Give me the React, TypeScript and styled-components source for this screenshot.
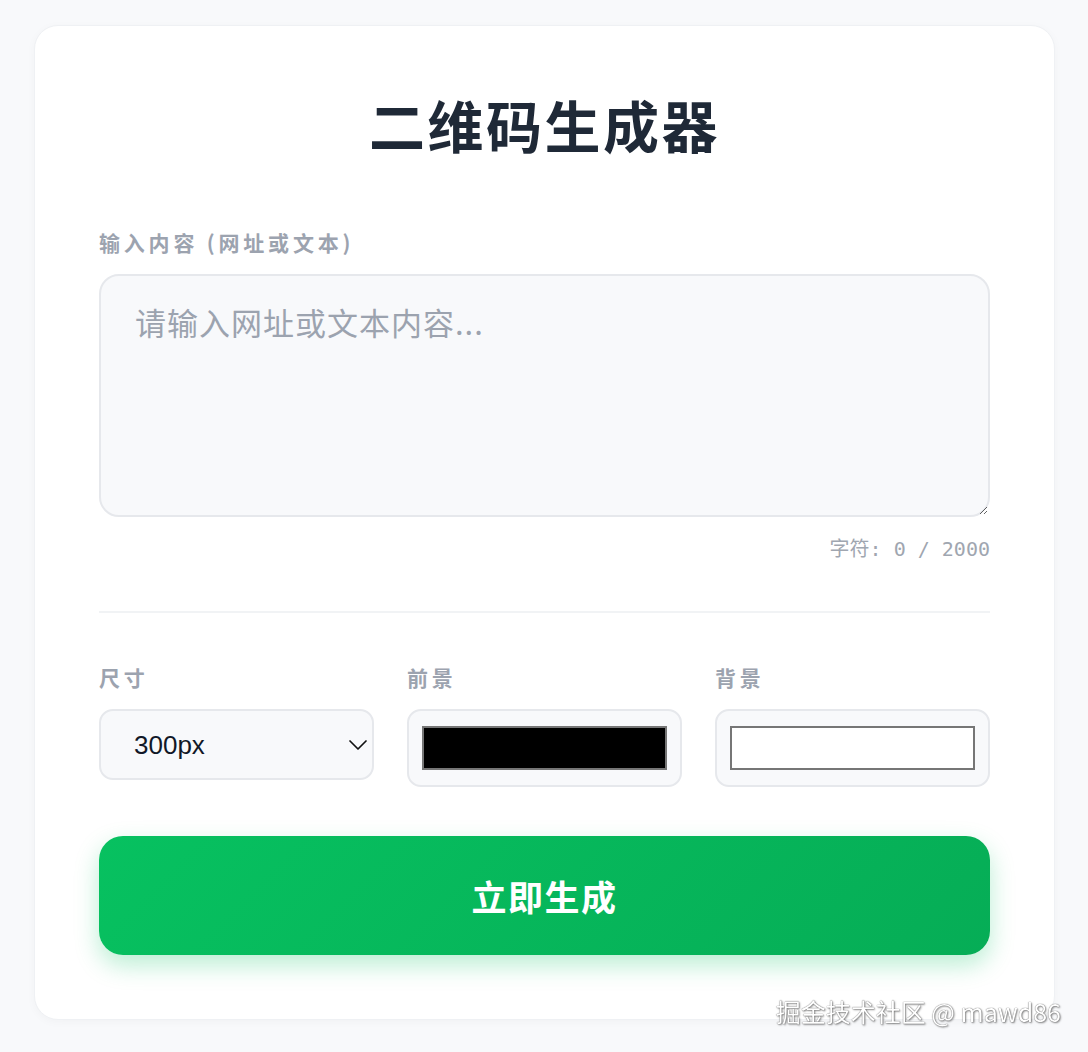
import React, { useState } from 'react';
import styled, { createGlobalStyle } from 'styled-components';
import { ChevronDown } from 'lucide-react';

const GlobalStyle = createGlobalStyle`
  html, body {
    margin: 0;
    min-height: 100%;
    background: #f8f9fb;
  }
  body {
    font-family: Inter, "Noto Sans CJK SC", "Noto Sans", sans-serif;
  }
  * { box-sizing: border-box; }
`;

const Page = styled.div`
  padding: 25px 33px 30px 34px;
  min-height: 1052px;
`;

const Card = styled.div`
  background: #ffffff;
  border: 1px solid #eff1f4;
  border-radius: 24px;
  padding: 64px 64px 64px;
  box-shadow: 0 2px 10px rgba(15, 23, 42, 0.03);
`;

const Title = styled.h1`
  margin: 0 0 73px;
  text-align: center;
  font-family: "Noto Sans CJK SC", sans-serif;
  font-size: 56px;
  line-height: 67px;
  font-weight: 700;
  letter-spacing: 2.5px;
  color: #1f2937;
`;

const Label = styled.div`
  font-family: "Noto Sans CJK SC", sans-serif;
  font-size: 21px;
  line-height: 24px;
  font-weight: 700;
  letter-spacing: 3.8px;
  color: #9ca3af;
  margin-bottom: 20px;
`;

const TextArea = styled.textarea`
  display: block;
  width: 100%;
  height: 243px;
  padding: 25px 34px;
  border: 2px solid #e6e8ec;
  border-radius: 20px;
  background: #f8f9fb;
  font-family: "Noto Sans CJK SC", sans-serif;
  font-size: 31px;
  line-height: 42px;
  letter-spacing: 1px;
  color: #1f2937;
  outline: none;
  resize: vertical;

  &::placeholder {
    color: #9ca3af;
  }
`;

const Counter = styled.div`
  margin-top: 18px;
  text-align: right;
  font-family: "DejaVu Sans Mono", "Noto Sans CJK SC", monospace;
  font-size: 20px;
  line-height: 28px;
  color: #a0a6b0;
`;

const Divider = styled.hr`
  border: 0;
  height: 2px;
  background: #f1f3f5;
  margin: 48px 0 52px;
`;

const OptionsGrid = styled.div`
  display: grid;
  grid-template-columns: repeat(3, 1fr);
  column-gap: 33px;
  align-items: start;
`;

const Field = styled.div`
  display: flex;
  flex-direction: column;
`;

const SelectWrap = styled.div`
  position: relative;
`;

const Select = styled.select`
  appearance: none;
  width: 100%;
  height: 71px;
  padding: 0 40px 0 33px;
  border: 2px solid #e6e8ec;
  border-radius: 14px;
  background: #f8f9fb;
  font-family: "Liberation Sans", Arial, sans-serif;
  font-size: 26px;
  color: #111827;
  outline: none;
`;

const Chevron = styled(ChevronDown)`
  position: absolute;
  right: 0;
  top: 50%;
  transform: translateY(-50%);
  pointer-events: none;
  color: #111;
`;

const ColorInput = styled.input`
  appearance: none;
  display: block;
  width: 100%;
  height: 78px;
  padding: 15px 13px;
  border: 2px solid #e6e8ec;
  border-radius: 14px;
  background: #f8f9fb;
  cursor: pointer;

  &::-webkit-color-swatch-wrapper {
    padding: 0;
  }
  &::-webkit-color-swatch {
    border: 2px solid #767676;
    border-radius: 0;
  }
`;

const GenerateButton = styled.button`
  display: block;
  width: 100%;
  height: 119px;
  margin-top: 49px;
  border: 0;
  border-radius: 24px;
  background: linear-gradient(135deg, #07c160 0%, #06ad56 100%);
  box-shadow: 0 10px 24px rgba(7, 193, 96, 0.28);
  color: #ffffff;
  font-family: "Noto Sans CJK SC", sans-serif;
  font-size: 35px;
  font-weight: 700;
  letter-spacing: 1.5px;
  cursor: pointer;
`;

const Watermark = styled.div`
  position: fixed;
  right: 27px;
  bottom: 23px;
  font-family: "Noto Sans CJK SC", "Liberation Sans", sans-serif;
  font-size: 25px;
  color: #ffffff;
  text-shadow: 0 0 1px rgba(0, 0, 0, 0.8), 1px 1px 2px rgba(0, 0, 0, 0.45);
  pointer-events: none;
`;

const App: React.FC = () => {
  const [text, setText] = useState('');
  const [size, setSize] = useState('300');
  const [fg, setFg] = useState('#000000');
  const [bg, setBg] = useState('#ffffff');

  return (
    <>
      <GlobalStyle />
      <Page>
        <Card>
          <Title>二维码生成器</Title>
          <Label>输入内容 (网址或文本)</Label>
          <TextArea
            placeholder="请输入网址或文本内容..."
            value={text}
            maxLength={2000}
            onChange={(e) => setText(e.target.value)}
          />
          <Counter>字符: {text.length} / 2000</Counter>
          <Divider />
          <OptionsGrid>
            <Field>
              <Label>尺寸</Label>
              <SelectWrap>
                <Select value={size} onChange={(e) => setSize(e.target.value)}>
                  <option value="200">200px</option>
                  <option value="300">300px</option>
                  <option value="400">400px</option>
                  <option value="500">500px</option>
                </Select>
                <Chevron size={32} strokeWidth={1.3} />
              </SelectWrap>
            </Field>
            <Field>
              <Label>前景</Label>
              <ColorInput type="color" value={fg} onChange={(e) => setFg(e.target.value)} />
            </Field>
            <Field>
              <Label>背景</Label>
              <ColorInput type="color" value={bg} onChange={(e) => setBg(e.target.value)} />
            </Field>
          </OptionsGrid>
          <GenerateButton>立即生成</GenerateButton>
        </Card>
      </Page>
      <Watermark>掘金技术社区 @ mawd86</Watermark>
    </>
  );
};

export default App;
